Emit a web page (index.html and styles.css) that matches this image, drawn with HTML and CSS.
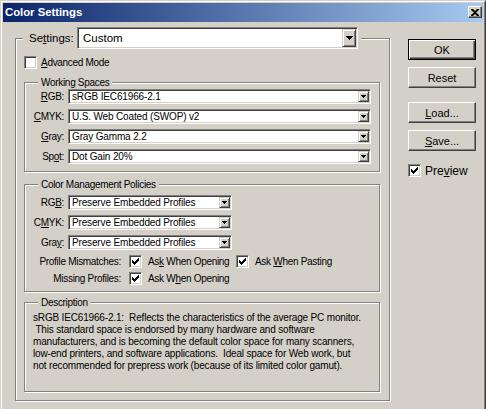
FILE: index.html
```html
<!DOCTYPE html>
<html>
<head>
<meta charset="utf-8">
<link rel="stylesheet" href="styles.css">
</head>
<body>
<div class="window">
  <div class="titlebar">
    <span class="title">Color Settings</span>
    <span class="close"><svg width="8" height="7" viewBox="0 0 8 7"><path d="M0 0h2l2 2 2-2h2v1L5 3.5 8 6v1H6L4 5 2 7H0V6l3-2.5L0 1z" fill="#000"/></svg></span>
  </div>
  <div class="body">
    <fieldset class="group outer">
      <legend class="outer-legend">
        <div class="legend-row">
          <span class="settings-label">Se<u>t</u>tings:</span>
          <div class="combo combo-lg">
            <span class="combo-text">Custom</span>
            <span class="combo-btn"><svg width="7" height="4" viewBox="0 0 7 4"><path d="M0 0h7v1H6v1H5v1H4v1H3V3H2V2H1V1H0z" fill="#000"/></svg></span>
          </div>
        </div>
      </legend>
      <div class="outer-inner">
        <div class="check-row">
          <span class="cb"></span>
          <span class="cb-text"><u>A</u>dvanced Mode</span>
        </div>

        <fieldset class="group inner">
          <legend class="inner-legend">Working Spaces</legend>
          <div class="rows ws-rows">
            <div class="row"><span class="lbl"><u>R</u>GB:</span><div class="combo w-wide"><span class="combo-text">sRGB IEC61966-2.1</span><span class="combo-btn"><svg width="5" height="3" viewBox="0 0 5 3"><path d="M0 0h5v1H4v1H3v1H2V2H1V1H0z" fill="#000"/></svg></span></div></div>
            <div class="row"><span class="lbl"><u>C</u>MYK:</span><div class="combo w-wide"><span class="combo-text">U.S. Web Coated (SWOP) v2</span><span class="combo-btn"><svg width="5" height="3" viewBox="0 0 5 3"><path d="M0 0h5v1H4v1H3v1H2V2H1V1H0z" fill="#000"/></svg></span></div></div>
            <div class="row"><span class="lbl"><u>G</u>ray:</span><div class="combo w-wide"><span class="combo-text">Gray Gamma 2.2</span><span class="combo-btn"><svg width="5" height="3" viewBox="0 0 5 3"><path d="M0 0h5v1H4v1H3v1H2V2H1V1H0z" fill="#000"/></svg></span></div></div>
            <div class="row"><span class="lbl">Sp<u>o</u>t:</span><div class="combo w-wide"><span class="combo-text">Dot Gain 20%</span><span class="combo-btn"><svg width="5" height="3" viewBox="0 0 5 3"><path d="M0 0h5v1H4v1H3v1H2V2H1V1H0z" fill="#000"/></svg></span></div></div>
          </div>
        </fieldset>

        <fieldset class="group inner cm">
          <legend class="inner-legend">Color Management Policies</legend>
          <div class="rows cm-rows">
            <div class="row"><span class="lbl">RG<u>B</u>:</span><div class="combo w-narrow"><span class="combo-text">Preserve Embedded Profiles</span><span class="combo-btn"><svg width="5" height="3" viewBox="0 0 5 3"><path d="M0 0h5v1H4v1H3v1H2V2H1V1H0z" fill="#000"/></svg></span></div></div>
            <div class="row"><span class="lbl">C<u>M</u>YK:</span><div class="combo w-narrow"><span class="combo-text">Preserve Embedded Profiles</span><span class="combo-btn"><svg width="5" height="3" viewBox="0 0 5 3"><path d="M0 0h5v1H4v1H3v1H2V2H1V1H0z" fill="#000"/></svg></span></div></div>
            <div class="row"><span class="lbl">Gra<u>y</u>:</span><div class="combo w-narrow"><span class="combo-text">Preserve Embedded Profiles</span><span class="combo-btn"><svg width="5" height="3" viewBox="0 0 5 3"><path d="M0 0h5v1H4v1H3v1H2V2H1V1H0z" fill="#000"/></svg></span></div></div>
          </div>
          <div class="opts">
            <div class="opt-row">
              <span class="opt-lbl">Profile Mismatches:</span>
              <span class="opt opt-first"><span class="cb"><svg width="9" height="9" viewBox="0 0 9 9"><path d="M1 3h1v1h1v1h1V4h1V3h1V2h1V1h1v3H7v1H6v1H5v1H4v1H3V7H2V6H1z" fill="#000"/></svg></span><span class="opt-text">As<u>k</u> When Opening</span></span>
              <span class="opt"><span class="cb"><svg width="9" height="9" viewBox="0 0 9 9"><path d="M1 3h1v1h1v1h1V4h1V3h1V2h1V1h1v3H7v1H6v1H5v1H4v1H3V7H2V6H1z" fill="#000"/></svg></span><span class="opt-text">Ask <u>W</u>hen Pasting</span></span>
            </div>
            <div class="opt-row">
              <span class="opt-lbl">Missing Profiles:</span>
              <span class="opt opt-first"><span class="cb"><svg width="9" height="9" viewBox="0 0 9 9"><path d="M1 3h1v1h1v1h1V4h1V3h1V2h1V1h1v3H7v1H6v1H5v1H4v1H3V7H2V6H1z" fill="#000"/></svg></span><span class="opt-text">Ask W<u>h</u>en Opening</span></span>
            </div>
          </div>
        </fieldset>

        <fieldset class="group inner desc">
          <legend class="inner-legend">Description</legend>
          <div class="desc-text">
            <span>sRGB IEC61966-2.1:  Reflects the characteristics of the average PC monitor.</span>
            <span> This standard space is endorsed by many hardware and software</span>
            <span>manufacturers, and is becoming the default color space for many scanners,</span>
            <span>low-end printers, and software applications.  Ideal space for Web work, but</span>
            <span>not recommended for prepress work (because of its limited color gamut).</span>
          </div>
        </fieldset>
      </div>
    </fieldset>

    <div class="buttons">
      <div class="btn default">OK</div>
      <div class="btn gap-s">Reset</div>
      <div class="btn gap-l"><span><u>L</u>oad...</span></div>
      <div class="btn gap-s"><span><u>S</u>ave...</span></div>
      <div class="preview">
        <span class="cb"><svg width="9" height="9" viewBox="0 0 9 9"><path d="M1 3h1v1h1v1h1V4h1V3h1V2h1V1h1v3H7v1H6v1H5v1H4v1H3V7H2V6H1z" fill="#000"/></svg></span>
        <span class="preview-text">Pre<u>v</u>iew</span>
      </div>
    </div>
  </div>
</div>
</body>
</html>
```
FILE: styles.css
```css
html, body {
  margin: 0;
  padding: 0;
  background: #d4d0c8;
  overflow: hidden;
  height: 409px;
}

.window {
  box-sizing: border-box;
  width: 486px;
  height: 416px;
  background: #d4d0c8;
  border: 1px solid;
  border-color: #d4d0c8 #404040 #404040 #d4d0c8;
  box-shadow: inset 1px 1px #fff, inset -1px -1px #808080;
  padding: 2px;
  font-family: "Liberation Sans", Arial, sans-serif;
  font-size: 10px;
  letter-spacing: -0.3px;
  color: #000;
}

.titlebar {
  height: 19px;
  display: flex;
  align-items: flex-start;
  justify-content: space-between;
  background: linear-gradient(to right, #0a246a, #a6caf0);
  padding-left: 2px;
}

.title {
  font-weight: bold;
  font-size: 11.3px;
  line-height: 19px;
  color: #fff;
  letter-spacing: 0;
}

.close {
  box-sizing: border-box;
  width: 14px;
  height: 12px;
  margin: 3px 1px 0 0;
  background: #d4d0c8;
  border: 1px solid;
  border-color: #fff #404040 #404040 #fff;
  box-shadow: inset -1px -1px #808080;
  display: flex;
  align-items: center;
  justify-content: center;
}

.body {
  display: flex;
  align-items: flex-start;
  padding: 5px 0 0 12px;
}

.group {
  margin: 0;
  padding: 0;
  min-inline-size: 0;
  border: 1px solid #808080;
  box-shadow: inset 1px 1px #fff, 1px 1px #fff;
}

.outer {
  box-sizing: border-box;
  width: 375px;
  flex: none;
}

.outer-legend {
  margin-left: 7px;
  padding: 0 3px 0 6px;
  background: #d4d0c8;
}

.legend-row {
  display: flex;
  align-items: center;
  height: 22px;
}

.settings-label {
  width: 48px;
  font-size: 11.5px;
  letter-spacing: 0;
}

.outer-inner {
  padding: 6px 9px 8px 8px;
}

.check-row {
  display: flex;
  align-items: center;
  height: 14px;
  margin-bottom: 7px;
}

.cb {
  box-sizing: border-box;
  width: 13px;
  height: 13px;
  flex: none;
  background: #fff;
  border: 1px solid;
  border-color: #808080 #fff #fff #808080;
  box-shadow: inset 1px 1px #404040, inset -1px -1px #d4d0c8;
  display: flex;
  align-items: center;
  justify-content: center;
}

.cb-text {
  margin-left: 4px;
}

.inner-legend {
  margin-left: 13px;
  padding: 0 3px;
  line-height: 13px;
  background: #d4d0c8;
}

.cm {
  margin-top: 6px;
}

.desc {
  margin-top: 4px;
}

.rows {
  display: flex;
  flex-direction: column;
  gap: 5px;
}

.ws-rows {
  padding-bottom: 7px;
}

.cm-rows {
  padding-top: 4px;
}

.row {
  display: flex;
  align-items: center;
  height: 15px;
}

.lbl {
  width: 39px;
  margin-right: 4px;
  text-align: right;
  flex: none;
}

.combo {
  box-sizing: border-box;
  height: 15px;
  padding: 1px;
  background: #fff;
  border: 1px solid;
  border-color: #808080 #fff #fff #808080;
  box-shadow: inset 1px 1px #404040, inset -1px -1px #d4d0c8;
  display: flex;
  flex: none;
}

.w-wide {
  width: 303px;
}

.w-narrow {
  width: 164px;
}

.combo-text {
  flex: 1;
  padding-left: 2px;
  line-height: 11px;
  white-space: nowrap;
  overflow: hidden;
  letter-spacing: -0.15px;
}

.combo-btn {
  box-sizing: border-box;
  width: 11px;
  height: 11px;
  flex: none;
  background: #d4d0c8;
  border: 1px solid;
  border-color: #d4d0c8 #404040 #404040 #d4d0c8;
  box-shadow: inset 1px 1px #fff, inset -1px -1px #808080;
  display: flex;
  align-items: center;
  justify-content: center;
}

.combo-lg {
  width: 281px;
  height: 22px;
}

.combo-lg .combo-text {
  font-size: 11.5px;
  line-height: 18px;
  padding-left: 4px;
  letter-spacing: 0;
}

.combo-lg .combo-btn {
  width: 14px;
  height: 18px;
}

.opts {
  padding: 5px 0 6px 0;
}

.opt-row {
  display: flex;
  align-items: center;
  height: 13px;
}

.opt-row + .opt-row {
  margin-top: 4px;
}

.opt-lbl {
  width: 96px;
  margin-right: 8px;
  text-align: right;
  flex: none;
}

.opt {
  display: flex;
  align-items: center;
}

.opt-first {
  width: 107px;
}

.opt-text {
  margin-left: 6px;
  white-space: nowrap;
}

.desc-text {
  padding: 3px 0 19px 8px;
  line-height: 12px;
  letter-spacing: -0.17px;
}

.desc-text span {
  display: block;
  white-space: pre;
}

.buttons {
  display: flex;
  flex-direction: column;
  width: 68px;
  margin: 12px 0 0 18px;
  flex: none;
}

.btn {
  box-sizing: border-box;
  width: 68px;
  height: 21px;
  background: #d4d0c8;
  border: 1px solid;
  border-color: #fff #404040 #404040 #fff;
  box-shadow: inset -1px -1px #808080;
  display: flex;
  align-items: center;
  justify-content: center;
  font-size: 11px;
  letter-spacing: 0;
}

.btn.default {
  border-color: #000;
  box-shadow: inset 1px 1px #fff, inset -1px -1px #404040, inset -2px -2px #808080;
}

.gap-s {
  margin-top: 7px;
}

.gap-l {
  margin-top: 14px;
}

.preview {
  display: flex;
  align-items: center;
  height: 13px;
  margin-top: 13px;
}

.preview-text {
  margin-left: 4px;
  font-size: 12px;
  letter-spacing: 0;
}
```
